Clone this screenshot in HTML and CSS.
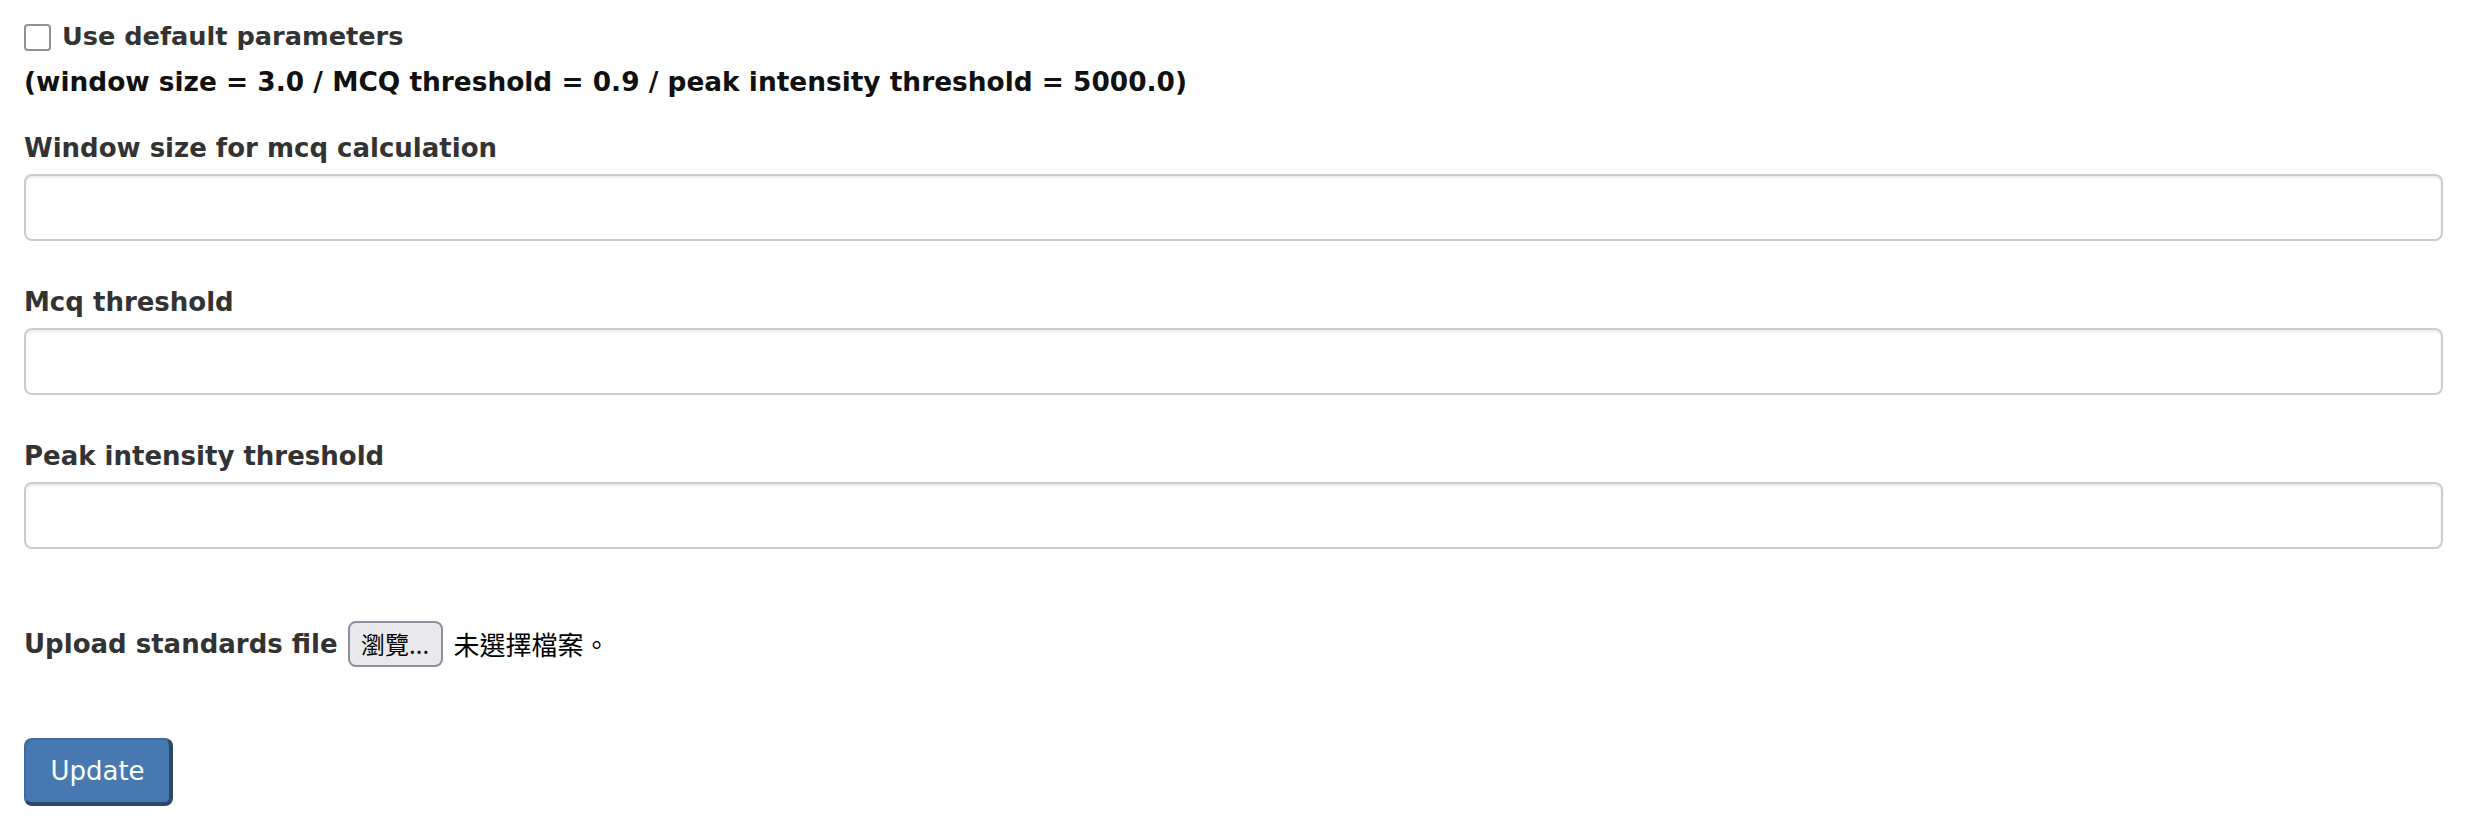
FILE: index.html
```html
<!DOCTYPE html>
<html>
<head>
<meta charset="utf-8">
<title>Parameters</title>
<link rel="stylesheet" href="styles.css">
</head>
<body>
<form class="form">
  <div class="check-row">
    <input type="checkbox" class="check" id="defaults">
    <label for="defaults" class="lbl check-lbl">Use default parameters</label>
  </div>
  <div class="defaults-note">(window size = 3.0 / MCQ threshold = 0.9 / peak intensity threshold = 5000.0)</div>

  <div class="group">
    <label class="lbl block">Window size for mcq calculation</label>
    <input type="text" class="field">
  </div>
  <div class="group">
    <label class="lbl block">Mcq threshold</label>
    <input type="text" class="field">
  </div>
  <div class="group group-last">
    <label class="lbl block">Peak intensity threshold</label>
    <input type="text" class="field">
  </div>

  <div class="upload-row">
    <span class="lbl">Upload standards file</span>
    <span class="file-btn">瀏覽...</span>
    <span class="file-name">未選擇檔案。</span>
  </div>

  <div class="actions">
    <button type="button" class="btn-update">Update</button>
  </div>
</form>
</body>
</html>
```

FILE: styles.css
```css
html, body {
  margin: 0;
  padding: 0;
  background: #fff;
}

body {
  font-family: "DejaVu Sans", Verdana, sans-serif;
  font-size: 26px;
  line-height: 40px;
  color: #333;
}

.form {
  padding: 16px 47px 0 24px;
}

.lbl {
  font-weight: bold;
  color: #333;
}

.block {
  display: block;
  margin-bottom: 6px;
}

.check-row {
  display: flex;
  align-items: center;
  gap: 11px;
  height: 40px;
}

.check-lbl {
  font-size: 25.6px;
}

.check {
  appearance: none;
  -webkit-appearance: none;
  margin: 2px 0 0 0;
  width: 27px;
  height: 27px;
  box-sizing: border-box;
  border: 2px solid #8f8f9d;
  border-radius: 4px;
  background: #fff;
}

.defaults-note {
  font-weight: bold;
  font-size: 26.4px;
  color: #111;
  margin-top: 6px;
  margin-bottom: 26px;
}

.group {
  margin-bottom: 41px;
}

.group-last {
  margin-bottom: 72px;
}

.field {
  display: block;
  box-sizing: border-box;
  width: 100%;
  height: 67px;
  margin: 0;
  border: 2px solid #ccc;
  border-radius: 8px;
  background: #fff;
  box-shadow: inset 0 2px 2px rgba(0, 0, 0, 0.075);
  font: inherit;
  padding: 0 16px;
}

.upload-row {
  display: flex;
  align-items: center;
  height: 46px;
}

.file-btn {
  box-sizing: border-box;
  height: 46px;
  width: 95px;
  margin-left: 10px;
  border: 2px solid #8f8f9d;
  border-radius: 8px;
  background: #e9e9ed;
  color: #000;
  font-family: "Noto Sans CJK TC", "DejaVu Sans", sans-serif;
  font-size: 24px;
  line-height: 42px;
  text-align: center;
  white-space: nowrap;
}

.file-name {
  margin-left: 11px;
  color: #000;
  font-family: "Noto Sans CJK TC", sans-serif;
  font-size: 26px;
}

.actions {
  margin-top: 71px;
}

.btn-update {
  box-sizing: border-box;
  width: 149px;
  height: 68px;
  margin: 0;
  padding: 0;
  background: #4779b0;
  border: 2px solid #3f6a9c;
  border-right: 4px solid #2d4769;
  border-bottom: 4px solid #2d4769;
  border-radius: 8px;
  color: #fff;
  font-family: "DejaVu Sans", Verdana, sans-serif;
  font-size: 26px;
  line-height: 60px;
  text-align: center;
}
```
